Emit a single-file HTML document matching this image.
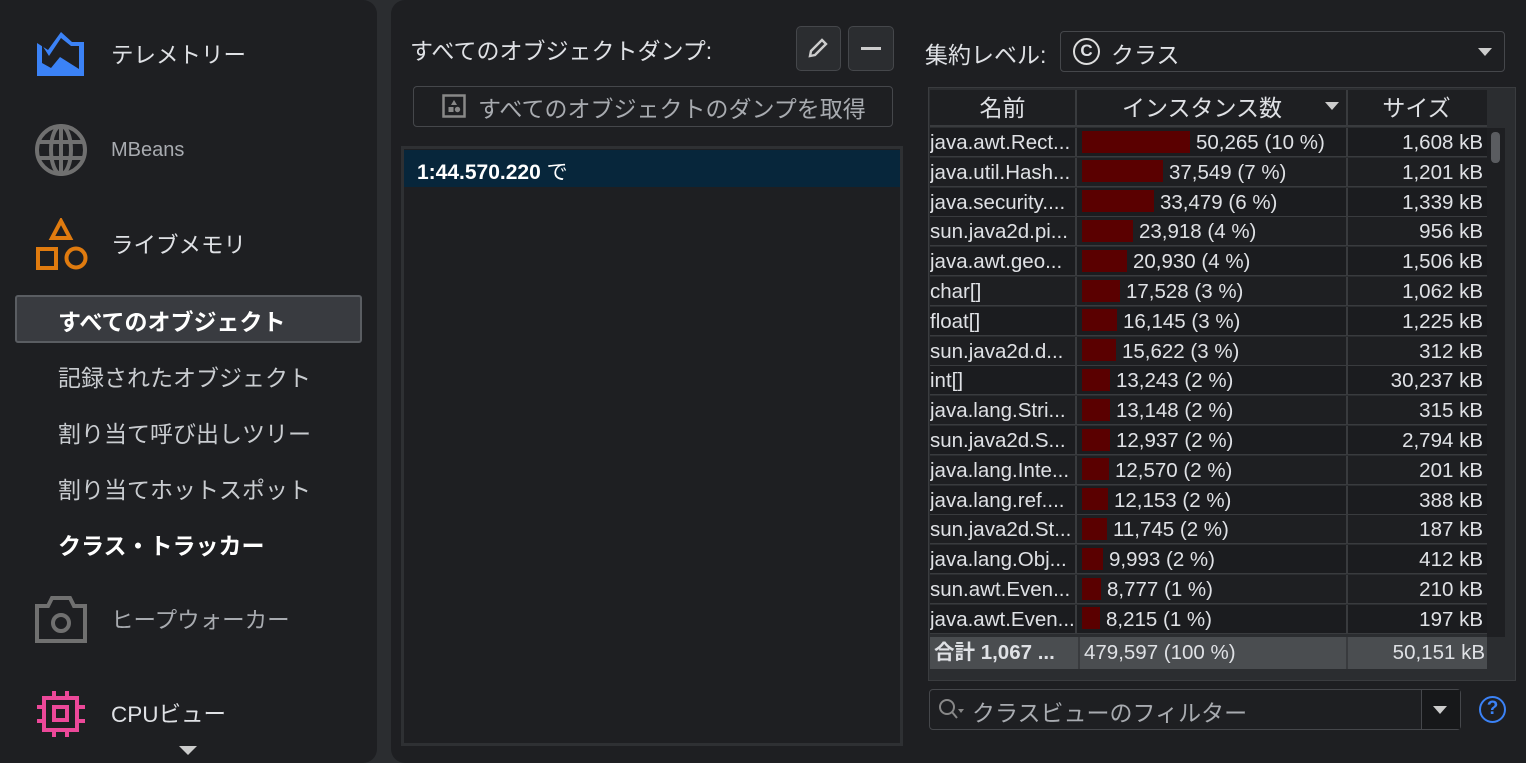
<!DOCTYPE html>
<html><head><meta charset="utf-8"><style>
*{box-sizing:border-box;margin:0;padding:0}
body{width:1526px;height:763px;background:#2b2d30;font-family:"Liberation Sans","Noto Sans CJK JP",sans-serif;color:#dfe1e5;position:relative;overflow:hidden}
.lp{position:absolute;left:0;top:0;width:377px;height:763px;background:#1e1f22;border-radius:0 14px 14px 0}
.rp{position:absolute;left:391px;top:0;width:1135px;height:763px;background:#1e1f22;border-radius:14px 0 0 14px}
.nav{position:absolute;left:111px;font-size:22.5px;color:#dfe1e5;white-space:nowrap}
.sub{position:absolute;left:58px;font-size:23px;color:#c9ccd0;white-space:nowrap}
.ic{position:absolute}
.tb{position:absolute;left:928px;top:87px;width:588px;height:594px;background:#2b2d30;border:1px solid #3a3c3f}
.row{position:absolute;left:930px;height:29px;width:557px;border-bottom:1px solid #393b3e;font-size:20.5px;white-space:nowrap}
.row div{position:absolute;top:0;height:29px;line-height:29px}
.c1{left:0;width:147px;overflow:hidden;border-right:2px solid #393b3e}
.c2{left:148px;width:270px;border-right:2px solid #393b3e}
.c3{left:418px;width:137px;text-align:right;padding-right:2px}
.bar{display:inline-block;height:22px;background:#5a0000;vertical-align:middle;margin:0 6px 0 4px;position:relative;top:-2px}
</style></head><body>
<div class="lp"></div><div class="rp"></div>

<svg class="ic" style="left:36px;top:32px" width="50" height="45" viewBox="0 0 50 45"><path d="M1 11 L1 44 L48 44 L48 10 L36 10 L25 0 L12 18 Z" fill="#3b82f6"/><path d="M6 13 L6 31 L15 36 L24 25 L43 37 L43 14 L35 14 L25 6 L13 24 Z" fill="#1e1f22"/></svg>
<div class="nav" style="top:38px">テレメトリー</div>
<svg class="ic" style="left:34px;top:124px" width="54" height="54" viewBox="0 0 54 54" fill="none" stroke="#707070" stroke-width="4"><circle cx="27" cy="26" r="24"/><ellipse cx="27" cy="26" rx="10" ry="24"/><line x1="3" y1="18" x2="51" y2="18"/><line x1="3" y1="34" x2="51" y2="34"/><line x1="27" y1="2" x2="27" y2="50"/></svg>
<div class="nav" style="top:139px;font-size:20px;color:#a8abb0">MBeans</div>
<svg class="ic" style="left:36px;top:218px" width="52" height="52" viewBox="0 0 52 52" fill="none" stroke="#e07b0f" stroke-width="4"><path d="M25 3 L34 20 L16 20 Z"/><rect x="2" y="31" width="18" height="19"/><circle cx="40" cy="40" r="9.5"/></svg>
<div class="nav" style="top:228px">ライブメモリ</div>
<div style="position:absolute;left:15px;top:295px;width:347px;height:48px;background:#393b40;border:2px solid #5a5d62;border-radius:3px"></div>
<div class="sub" style="top:303px;color:#fff;font-weight:bold">すべてのオブジェクト</div>
<div class="sub" style="top:359px">記録されたオブジェクト</div>
<div class="sub" style="top:415px">割り当て呼び出しツリー</div>
<div class="sub" style="top:471px">割り当てホットスポット</div>
<div class="sub" style="top:527px;color:#fff;font-weight:bold">クラス・トラッカー</div>
<svg class="ic" style="left:34px;top:594px" width="54" height="50" viewBox="0 0 54 50" fill="none" stroke="#707070" stroke-width="4"><path d="M3 12 L14 12 L18 4 L36 4 L40 12 L51 12 L51 47 L3 47 Z"/><circle cx="27" cy="29" r="8"/></svg>
<div class="nav" style="top:603px;color:#a8abb0">ヒープウォーカー</div>
<svg class="ic" style="left:36px;top:690px" width="50" height="48" viewBox="0 0 50 48" fill="none" stroke="#ec4899" stroke-width="4"><rect x="8" y="8" width="33" height="32"/><rect x="18" y="17" width="13" height="13"/><path d="M18 1v7M31 1v7M18 40v7M31 40v7M1 17h7M1 31h7M41 17h8M41 31h8"/></svg>
<div class="nav" style="top:697px">CPUビュー</div>
<div style="position:absolute;left:179px;top:746px;border-left:9px solid transparent;border-right:9px solid transparent;border-top:9px solid #ccc"></div>

<div style="position:absolute;left:410px;top:32px;font-size:23px;white-space:nowrap">すべてのオブジェクトダンプ:</div>
<div style="position:absolute;left:796px;top:26px;width:45px;height:45px;background:#2b2d30;border:1px solid #45474b;border-radius:5px"></div>
<svg class="ic" style="left:806px;top:36px" width="24" height="24" viewBox="0 0 24 24" fill="none" stroke="#ccc" stroke-width="2.4"><path d="M4 20 L5 15 L16 4 L20 8 L9 19 Z"/></svg>
<div style="position:absolute;left:848px;top:26px;width:46px;height:45px;background:#2b2d30;border:1px solid #45474b;border-radius:5px"></div>
<div style="position:absolute;left:861px;top:47px;width:20px;height:3px;background:#ccc"></div>
<div style="position:absolute;left:413px;top:86px;width:480px;height:41px;border:1px solid #45474b;border-radius:4px"></div>
<svg class="ic" style="left:442px;top:94px" width="24" height="24" viewBox="0 0 24 24"><rect x="1.5" y="1.5" width="21" height="21" fill="none" stroke="#888" stroke-width="2.5"/><path d="M12 6 L15 11 L9 11Z" fill="#888"/><rect x="6.5" y="13" width="5" height="5" fill="#888"/><circle cx="15.5" cy="15.5" r="2.7" fill="#888"/></svg>
<div style="position:absolute;left:478px;top:90px;font-size:23px;color:#a8abb0;white-space:nowrap">すべてのオブジェクトのダンプを取得</div>
<div style="position:absolute;left:401px;top:146px;width:502px;height:600px;border:3px solid #2e3033;background:#1e1f22"></div>
<div style="position:absolute;left:404px;top:150px;width:496px;height:37px;background:#07263b"></div>
<div style="position:absolute;left:417px;top:156px;font-size:21px;color:#fff;white-space:nowrap"><b>1:44.570.220</b> で</div>

<div style="position:absolute;left:925px;top:36px;font-size:23px;white-space:nowrap">集約レベル:</div>
<div style="position:absolute;left:1060px;top:31px;width:445px;height:41px;border:1px solid #45474b;border-radius:4px"></div>
<div style="position:absolute;left:1073px;top:38px;width:27px;height:27px;border:2.5px solid #ddd;border-radius:50%;font-size:17px;font-weight:bold;text-align:center;line-height:22px">C</div>
<div style="position:absolute;left:1111px;top:36px;font-size:23px">クラス</div>
<div style="position:absolute;left:1478px;top:48px;border-left:7px solid transparent;border-right:7px solid transparent;border-top:8px solid #ccc"></div>

<div class="tb"></div>
<div style="position:absolute;left:930px;top:90px;width:557px;height:37px;background:#1e1f22;border-bottom:2px solid #393b3e;font-size:23px;white-space:nowrap">
<div style="position:absolute;left:0;width:147px;height:37px;line-height:37px;text-align:center;border-right:2px solid #393b3e">名前</div>
<div style="position:absolute;left:148px;width:270px;height:37px;line-height:37px;text-align:center;border-right:2px solid #393b3e;padding-right:20px">インスタンス数</div>
<div style="position:absolute;left:395px;top:12px;border-left:7px solid transparent;border-right:7px solid transparent;border-top:8px solid #ccc"></div>
<div style="position:absolute;left:418px;width:137px;height:37px;line-height:37px;text-align:center">サイズ</div>
</div>
<div style="position:absolute;left:1487px;top:128px;width:18px;height:509px;background:#1e1f22"></div>
<div style="position:absolute;left:1491px;top:132px;width:9px;height:31px;background:#5a5c60;border-radius:4px"></div>
<div id="rows"></div>
<div style="position:absolute;left:930px;top:637px;width:557px;height:32px;background:#4a4d50;font-size:20.5px;white-space:nowrap">
<div style="position:absolute;left:4px;line-height:32px;font-weight:bold">合計 1,067 ...</div>
<div style="position:absolute;left:148px;top:0;height:32px;border-left:2px solid #393b3e;line-height:32px;padding-left:4px;width:270px;border-right:2px solid #393b3e">479,597 (100 %)</div>
<div style="position:absolute;right:2px;line-height:32px">50,151 kB</div>
</div>

<div style="position:absolute;left:929px;top:689px;width:532px;height:41px;border:1px solid #45474b;border-radius:4px;background:#1e1f22"></div>
<div style="position:absolute;left:1421px;top:690px;width:39px;height:39px;background:#17181a;border-left:1px solid #45474b"></div>
<div style="position:absolute;left:1433px;top:706px;border-left:7px solid transparent;border-right:7px solid transparent;border-top:8px solid #ccc"></div>
<svg class="ic" style="left:938px;top:698px" width="30" height="24" viewBox="0 0 30 24" fill="none" stroke="#888" stroke-width="2"><circle cx="9" cy="9" r="7"/><path d="M14 14 L19 20"/><path d="M20 11 L26 11 L23 15Z" fill="#888" stroke="none"/></svg>
<div style="position:absolute;left:972px;top:694px;font-size:23px;color:#a8abb0;white-space:nowrap">クラスビューのフィルター</div>
<div style="position:absolute;left:1479px;top:696px;width:27px;height:27px;border:2.5px solid #3b82f6;border-radius:50%;color:#3b82f6;font-size:19px;font-weight:bold;text-align:center;line-height:22px">?</div>

<script>
var d=[["java.awt.Rect...",50265,"10","1,608"],["java.util.Hash...",37549,"7","1,201"],["java.security....",33479,"6","1,339"],["sun.java2d.pi...",23918,"4","956"],["java.awt.geo...",20930,"4","1,506"],["char[]",17528,"3","1,062"],["float[]",16145,"3","1,225"],["sun.java2d.d...",15622,"3","312"],["int[]",13243,"2","30,237"],["java.lang.Stri...",13148,"2","315"],["sun.java2d.S...",12937,"2","2,794"],["java.lang.Inte...",12570,"2","201"],["java.lang.ref....",12153,"2","388"],["sun.java2d.St...",11745,"2","187"],["java.lang.Obj...",9993,"2","412"],["sun.awt.Even...",8777,"1","210"],["java.awt.Even...",8215,"1","197"]];
var h="";d.forEach(function(r,i){var w=Math.round(r[1]/50265*108);
h+='<div class="row" style="top:'+(128+i*29.8)+'px;background:'+(i%2?'#1e1f22':'#1b1c1f')+'"><div class="c1">'+r[0]+'</div><div class="c2"><span class="bar" style="width:'+w+'px"></span>'+r[1].toLocaleString("en-US")+' ('+r[2]+' %)</div><div class="c3">'+r[3]+' kB</div></div>';});
document.getElementById("rows").innerHTML=h;
</script>
</body></html>
